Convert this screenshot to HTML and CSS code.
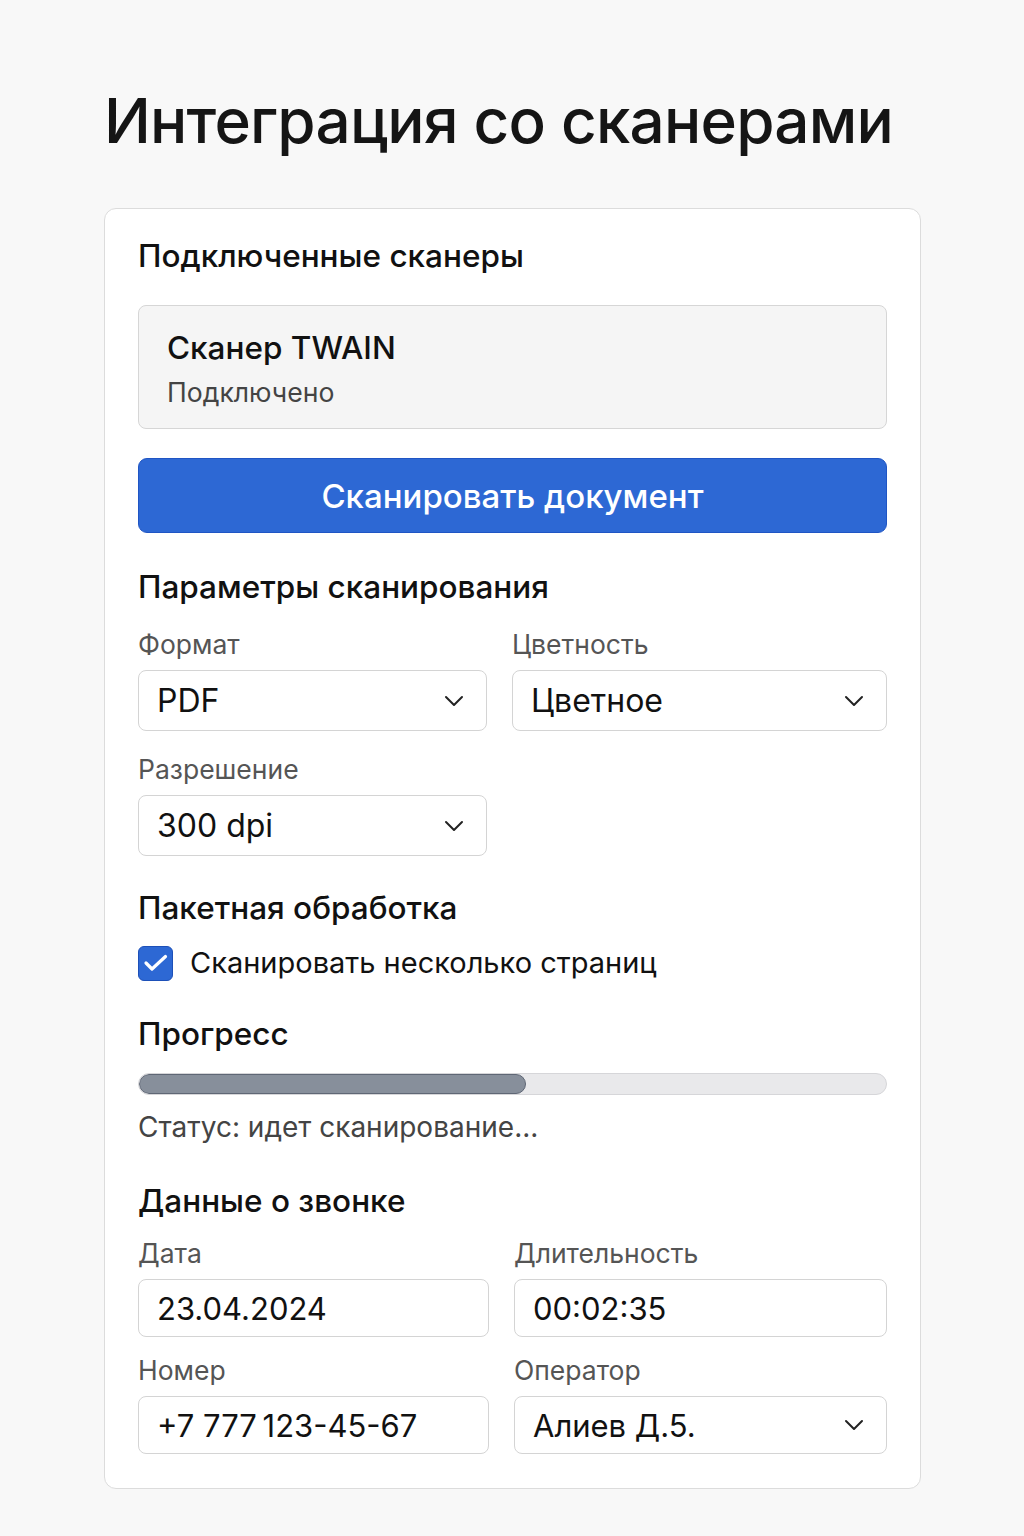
FILE: index.html
```html
<!DOCTYPE html>
<html lang="ru">
<head>
<meta charset="utf-8">
<title>Интеграция со сканерами</title>
<link rel="stylesheet" href="styles.css">
</head>
<body>
<main class="page">
  <h1 class="title">Интеграция со сканерами</h1>
  <section class="card">
    <h2 class="heading">Подключенные сканеры</h2>
    <div class="scanner">
      <div class="scanner-name">Сканер TWAIN</div>
      <div class="scanner-status">Подключено</div>
    </div>
    <button class="scan-btn" type="button">Сканировать документ</button>

    <h2 class="heading heading-params">Параметры сканирования</h2>
    <div class="grid">
      <div class="field">
        <div class="label">Формат</div>
        <div class="control select"><span>PDF</span><svg class="chev" viewBox="0 0 20 12"><path d="M2 2 L10 10 L18 2"/></svg></div>
      </div>
      <div class="field">
        <div class="label">Цветность</div>
        <div class="control select"><span>Цветное</span><svg class="chev" viewBox="0 0 20 12"><path d="M2 2 L10 10 L18 2"/></svg></div>
      </div>
      <div class="field">
        <div class="label">Разрешение</div>
        <div class="control select"><span>300 dpi</span><svg class="chev" viewBox="0 0 20 12"><path d="M2 2 L10 10 L18 2"/></svg></div>
      </div>
    </div>

    <h2 class="heading heading-batch">Пакетная обработка</h2>
    <label class="check-row">
      <span class="checkbox"><svg viewBox="0 0 33 33"><path d="M7 16 L13 22 L26.5 9.5"/></svg></span>
      <span class="check-label">Сканировать несколько страниц</span>
    </label>

    <h2 class="heading heading-progress">Прогресс</h2>
    <div class="progress"><div class="progress-fill" style="width: 51.8%"></div></div>
    <div class="status">Статус: идет сканирование...</div>

    <h2 class="heading heading-call">Данные о звонке</h2>
    <div class="grid grid-call">
      <div class="field">
        <div class="label">Дата</div>
        <div class="control input">23.04.2024</div>
      </div>
      <div class="field">
        <div class="label">Длительность</div>
        <div class="control input">00:02:35</div>
      </div>
      <div class="field">
        <div class="label">Номер</div>
        <div class="control input">+7 777&thinsp;123-45-67</div>
      </div>
      <div class="field">
        <div class="label">Оператор</div>
        <div class="control input select"><span>Алиев Д.5.</span><svg class="chev" viewBox="0 0 20 12"><path d="M2 2 L10 10 L18 2"/></svg></div>
      </div>
    </div>
  </section>
</main>
</body>
</html>
```

FILE: styles.css
```css
* { box-sizing: border-box; }

html, body {
  margin: 0;
  padding: 0;
  background: #f8f8f8;
}

body {
  font-family: Inter, "Noto Sans", "Liberation Sans", sans-serif;
  color: #111;
}

.page {
  padding: 81px 103px 48px 104px;
}

.title {
  margin: 0;
  font-size: 62px;
  line-height: 80px;
  font-weight: 500;
  letter-spacing: -0.8px;
  color: #151515;
  white-space: nowrap;
}

.card {
  margin-top: 47px;
  background: #fff;
  border: 1px solid #dcdcdc;
  border-radius: 12px;
  padding: 29px 33px 34px 33px;
}

.heading {
  margin: 0;
  font-size: 31.5px;
  line-height: 36px;
  font-weight: 500;
  color: #111;
}

.scanner {
  margin-top: 31px;
  background: #f5f5f5;
  border: 1px solid #d6d6d6;
  border-radius: 8px;
  padding: 23px 28px 20px 28px;
}

.scanner-name {
  font-size: 31.5px;
  line-height: 38px;
  font-weight: 500;
}

.scanner-status {
  margin-top: 9px;
  font-size: 26.6px;
  line-height: 32px;
  color: #444;
}

.scan-btn {
  display: block;
  width: 100%;
  margin-top: 29px;
  height: 75px;
  border: 1px solid #1f55c4;
  border-radius: 9px;
  background: #2d68d4;
  color: #fff;
  font-family: inherit;
  font-size: 33px;
  font-weight: 500;
  padding: 0;
}

.heading-params { margin-top: 36px; }

.grid {
  display: grid;
  grid-template-columns: 349px 1fr;
  column-gap: 25px;
  row-gap: 23px;
  margin-top: 24px;
}

.label {
  font-size: 26.5px;
  line-height: 30px;
  color: #555;
}

.control {
  margin-top: 11px;
  height: 61px;
  border: 1px solid #d4d4d4;
  border-radius: 8px;
  background: #fff;
  display: flex;
  align-items: center;
  padding: 0 17px 0 18px;
  font-size: 32px;
  color: #111;
}

.select {
  justify-content: space-between;
}

.chev {
  width: 20px;
  height: 12px;
  margin-right: 5px;
  fill: none;
  stroke: #222;
  stroke-width: 2;
  stroke-linecap: round;
  stroke-linejoin: round;
}

.heading-batch { margin-top: 34px; }

.check-row {
  display: flex;
  align-items: center;
  gap: 17px;
  margin-top: 19px;
}

.checkbox {
  width: 35px;
  height: 35px;
  border-radius: 6px;
  background: #2d68d4;
  border: 1px solid #1d50b8;
  display: flex;
  align-items: center;
  justify-content: center;
}

.checkbox svg {
  width: 33px;
  height: 33px;
  fill: none;
  stroke: #fff;
  stroke-width: 3.2;
  stroke-linecap: round;
  stroke-linejoin: round;
}

.check-label {
  font-size: 29px;
  line-height: 36px;
  color: #111;
}

.heading-progress { margin-top: 35px; }

.progress {
  margin-top: 21px;
  height: 22px;
  background: #e9e9eb;
  border: 1px solid #d6d6d9;
  border-radius: 11px;
  overflow: hidden;
}

.progress-fill {
  height: 100%;
  background: #878f9b;
  border: 1px solid #5f6775;
  border-radius: 11px;
}

.status {
  margin-top: 16px;
  font-size: 28px;
  line-height: 32px;
  color: #444;
}

.heading-call { margin-top: 40px; }

.grid-call {
  grid-template-columns: 351px 1fr;
  column-gap: 25px;
  row-gap: 18px;
  margin-top: 19px;
}

.grid-call .control {
  height: 58px;
  font-size: 31px;
}
```
